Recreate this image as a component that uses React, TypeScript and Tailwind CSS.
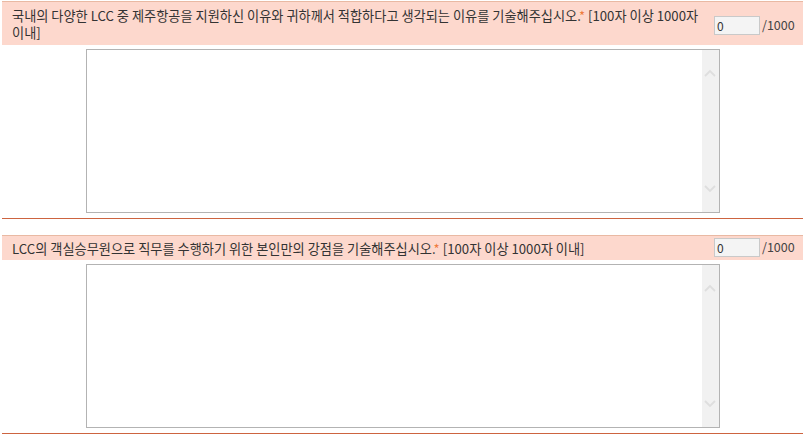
import React from 'react';

const FONT = { fontFamily: '"Noto Sans CJK KR", "Noto Sans", sans-serif' };

function Chevron({ up }: { up?: boolean }) {
  return (
    <svg width="12" height="8" viewBox="0 0 12 8" fill="none">
      <path
        d={up ? 'M1 7 L6 2 L11 7' : 'M1 1 L6 6 L11 1'}
        stroke="#dedede"
        strokeWidth="1.8"
      />
    </svg>
  );
}

interface QuestionProps {
  title: string;
  note: string;
  twoLine?: boolean;
}

function Question({ title, note, twoLine }: QuestionProps) {
  return (
    <div>
      {/* Question header */}
      <div className="flex items-start border-t border-[#e9b9a3] bg-[#fdd8cd]">
        <p
          className={
            'flex-1 pl-[10px] pr-2 text-[13.2px] leading-[17px] text-[#333] ' +
            (twoLine ? 'pt-[5px] pb-[4px]' : 'pt-[4px] pb-[3px]')
          }
        >
          {title}
          <span className="text-[#ef7b3c]">*</span> {note}
        </p>
        <div className={'flex w-[89px] shrink-0 items-center ' + (twoLine ? 'pt-[14px]' : 'pt-[2px]')}>
          <input
            defaultValue="0"
            className="h-[19px] w-[46px] border border-[#c9c9c9] bg-[#f4f4f4] px-[2px] text-[12px] text-[#333] outline-none"
          />
          <span className="pl-[2px] text-[12.5px] text-[#444]">/1000</span>
        </div>
      </div>

      {/* Answer box */}
      <div className="flex justify-center pt-[4px] pb-[5px]">
        <div className="flex h-[164px] w-[634px] border border-[#b3b3b3] bg-white">
          <textarea className="flex-1 resize-none overflow-hidden bg-white p-1 text-[12px] outline-none" />
          <div className="flex w-[17px] flex-col items-center justify-between bg-[#f1f1f1] pt-[19px] pb-[19px]">
            <Chevron up />
            <Chevron />
          </div>
        </div>
      </div>
      <div className="h-[1px] bg-[#cd6440]" />
    </div>
  );
}

export default function App() {
  return (
    <div className="min-h-screen bg-white pt-[1px]" style={FONT}>
      <div className="ml-[2px] flex w-[801px] flex-col gap-[16px]">
        <Question
          twoLine
          title="국내의 다양한 LCC 중 제주항공을 지원하신 이유와 귀하께서 적합하다고 생각되는 이유를 기술해주십시오."
          note="[100자 이상 1000자 이내]"
        />
        <Question
          title="LCC의 객실승무원으로 직무를 수행하기 위한 본인만의 강점을 기술해주십시오."
          note="[100자 이상 1000자 이내]"
        />
      </div>
    </div>
  );
}
